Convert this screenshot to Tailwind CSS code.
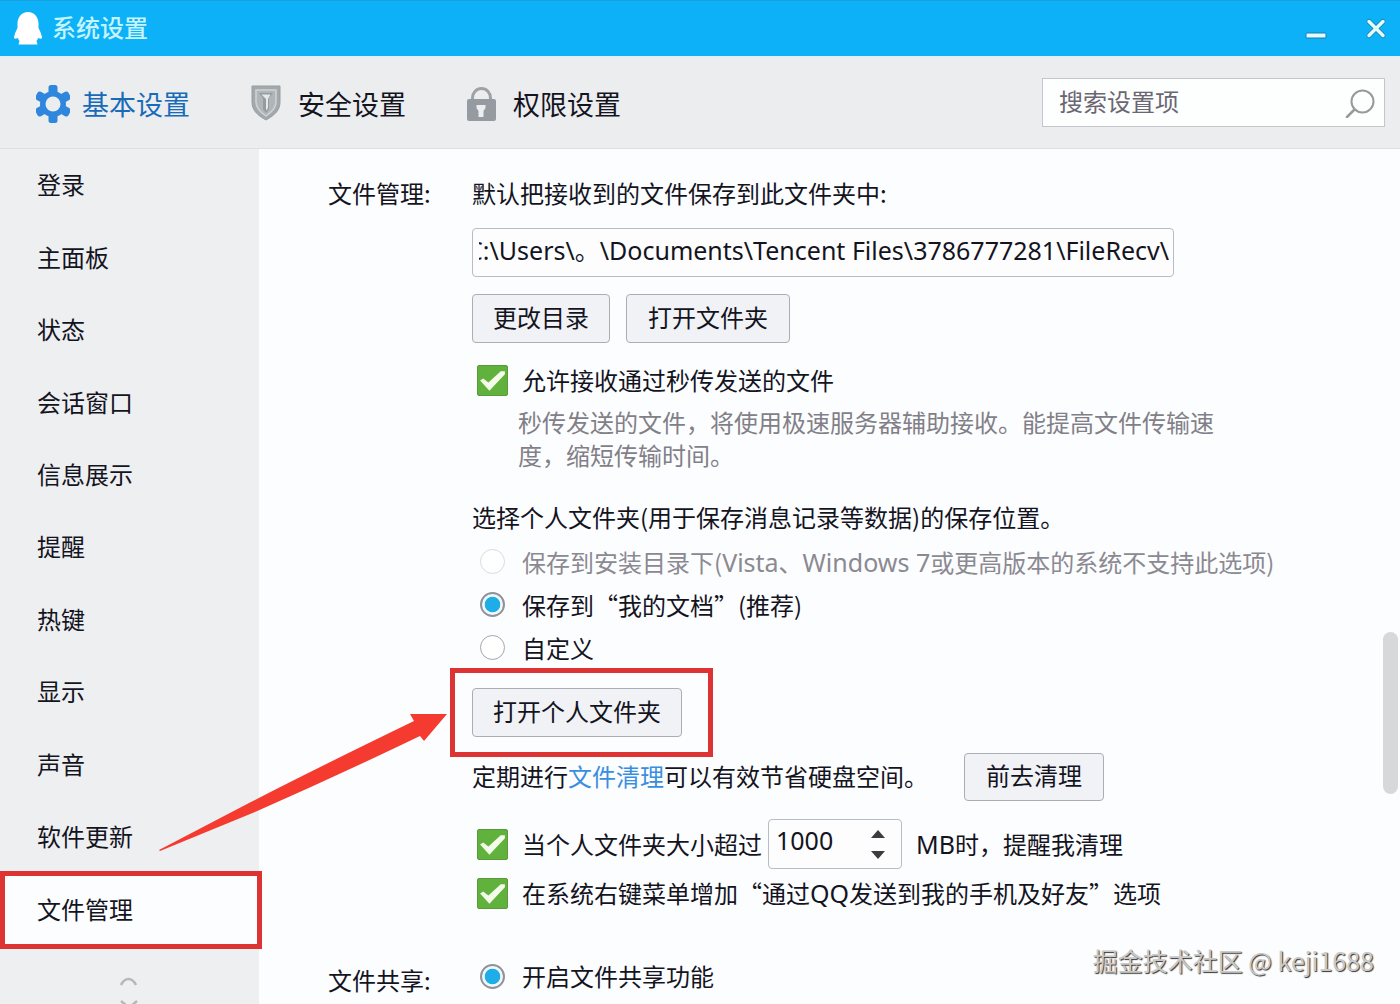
<!DOCTYPE html>
<html lang="zh-CN">
<head>
    <meta charset="UTF-8">
    <meta name="viewport" content="width=device-width, initial-scale=1.0">
    <title>系统设置</title>
    <script src="https://cdn.jsdelivr.net/npm/@tailwindcss/browser@4"></script>
</head>
<body class="relative flex h-screen flex-col overflow-hidden bg-[#fcfdfe] font-['Noto_Sans_CJK_SC',sans-serif] text-2xl leading-8 text-[#14141f]">

    <!-- Title bar -->
    <header class="flex h-14 shrink-0 items-center justify-between border-t border-[#1a9fd8] bg-[#0cb1f7] pl-3 pr-3">
        <div class="flex items-center gap-2">
            <svg class="h-9 w-8" viewBox="0 0 32 36" fill="#fff"><path d="M16 1C9.500 1 5.500 6.500 5.500 12.500V17C4 20 2.500 23 2 26.500c0 1.500 1.500 1.500 4 .5.3 1.500.8 2 1.500 3L6.500 33.500h19l-1-3.500c.7-1 1.200-1.500 1.500-3 2.500 1 4 1 4-.5-.5-3.500-2-6.500-3.500-9.500v-4.500C26.500 6.500 22.500 1 16 1z"/></svg>
            <h1 class="pb-1 text-2xl font-medium text-[#c5f4ff]">系统设置</h1>
        </div>
        <div class="flex items-center gap-9">
            <button aria-label="最小化" class="h-8 w-6"><svg class="h-8 w-6" viewBox="0 0 24 32"><rect x="2" y="20" width="20" height="5" rx="1" fill="#e4fbff" stroke="#1580b4"/></svg></button>
            <button aria-label="关闭" class="h-8 w-6"><svg class="h-8 w-6" viewBox="0 0 24 32" fill="none" stroke-linecap="round"><path d="M5 8.500l14 14M19 8.500l-14 14" stroke="#1580b4" stroke-width="5"/><path d="M5 8.500l14 14M19 8.500l-14 14" stroke="#e4fbff" stroke-width="3.500"/></svg></button>
        </div>
    </header>

    <!-- Tabs -->
    <div class="flex h-[93px] shrink-0 items-center justify-between border-b border-t border-b-[#dcdfe3] border-t-[#d5f3f8] bg-[#ecedef] pl-9 pr-[15px]">
        <nav class="flex gap-[61px] pt-[2px] text-[27px]">
            <a href="#" class="flex items-center gap-3 text-[#176bb8]">
                <svg class="h-[38px] w-[34px]" viewBox="0 0 34 38">
                    <g fill="#2f86dd">
                        <circle cx="17" cy="19" r="13"/>
                        <rect x="12.500" y="0" width="9" height="38" rx="2.500"/>
                        <rect x="12.500" y="0" width="9" height="38" rx="2.500" transform="rotate(60 17 19)"/>
                        <rect x="12.500" y="0" width="9" height="38" rx="2.500" transform="rotate(120 17 19)"/>
                    </g>
                    <circle cx="17" cy="19" r="7.500" fill="#ecedef"/>
                </svg>
                基本设置
            </a>
            <a href="#" class="flex items-center gap-[17px]">
                <svg class="h-[38px] w-[30px]" viewBox="0 0 30 38">
                    <path d="M1 1h28v16c0 8-5 13-14 18C6 30 1 25 1 17z" fill="#a3a8ac" stroke="#989da1"/>
                    <path d="M5 5h20v12c0 6-4 10-10 14C9 27 5 23 5 17z" fill="#b0b5b8" stroke="#cfd3d5" stroke-width="1.500"/>
                    <path d="M8 8h14l-4 5v11l-3 4-3-4V13z" fill="#959b9f"/>
                    <path d="M10.500 9.500h9L17 14v9l-2 2.500V14z" fill="#e6e9ea"/>
                </svg>
                安全设置
            </a>
            <a href="#" class="flex items-center gap-[17px]">
                <svg class="h-[38px] w-[29px]" viewBox="0 0 29 38">
                    <path d="M5.500 15v-2a9 9.500 0 0 1 18 0v2" fill="none" stroke="#9ca2a6" stroke-width="3"/>
                    <rect x="0" y="14" width="29" height="22" rx="2" fill="#959ba0"/>
                    <path d="M9.500 20h9v3l-2 3v6h-5v-6l-2-3z" fill="#eceef0"/>
                </svg>
                权限设置
            </a>
        </nav>
        <div class="relative">
            <input type="search" aria-label="搜索设置项" placeholder="搜索设置项" class="block h-[49px] w-[343px] border border-[#c3c6ca] bg-[#fdfefe] pb-1 pl-4 pr-12 placeholder:text-[#6b6672]">
            <button aria-label="搜索" class="absolute right-2 top-2 h-8 w-8"><svg class="h-8 w-8" viewBox="0 0 32 32" fill="none" stroke="#999" stroke-linecap="round"><circle cx="17.500" cy="15.500" r="11" stroke-width="2"/><path d="M9.500 23.500L2 31" stroke-width="2.500"/></svg></button>
        </div>
    </div>

    <div class="flex min-h-0 flex-1">
        <!-- Sidebar -->
        <aside class="w-[259px] shrink-0 bg-[#eeeff1]">
            <ul class="grid h-[797px] auto-rows-fr">
                <li><a href="#" class="flex h-full items-center pb-[2px] pl-[37px]">登录</a></li>
                <li><a href="#" class="flex h-full items-center pb-[2px] pl-[37px]">主面板</a></li>
                <li><a href="#" class="flex h-full items-center pb-[2px] pl-[37px]">状态</a></li>
                <li><a href="#" class="flex h-full items-center pb-[2px] pl-[37px]">会话窗口</a></li>
                <li><a href="#" class="flex h-full items-center pb-[2px] pl-[37px]">信息展示</a></li>
                <li><a href="#" class="flex h-full items-center pb-[2px] pl-[37px]">提醒</a></li>
                <li><a href="#" class="flex h-full items-center pb-[2px] pl-[37px]">热键</a></li>
                <li><a href="#" class="flex h-full items-center pb-[2px] pl-[37px]">显示</a></li>
                <li><a href="#" class="flex h-full items-center pb-[2px] pl-[37px]">声音</a></li>
                <li><a href="#" class="flex h-full items-center pb-[2px] pl-[37px]">软件更新</a></li>
                <li class="relative">
                    <a href="#" class="flex h-full items-center bg-[#fcfdfe] pb-[2px] pl-[37px]">文件管理</a>
                    <div class="pointer-events-none absolute -inset-y-[3px] left-0 -right-[3px] border-[5px] border-[#dd3333]"></div>
                </li>
            </ul>
            <svg class="mx-auto mt-7 h-[30px] w-6" viewBox="0 0 24 30" fill="none" stroke="#b5b8bc" stroke-width="2.500"><path d="M3 11c4-8 11-8 15 0M3 27l6 5M19 27l-6 5" /></svg>
        </aside>

        <!-- Settings -->
        <main class="relative min-w-0 flex-1 overflow-hidden pl-[69px] pt-6">
            <section class="flex">
                <h2 class="flex h-10 w-[144px] shrink-0 items-center">文件管理:</h2>
                <div class="min-w-0 flex-1">
                    <label for="savePath" class="flex h-10 items-center">默认把接收到的文件保存到此文件夹中:</label>
                    <input id="savePath" type="text" value="C:\Users\。\Documents\Tencent Files\3786777281\FileRecv\" class="mt-[15px] block h-[49px] w-[702px] max-w-full rounded-sm border border-[#b9bcc4] bg-[#fdfdfe] pb-2 pl-[6px] pr-1 font-['Noto_Sans','Noto_Sans_CJK_SC',sans-serif] text-[25px]">

                    <div class="mt-[17px] flex gap-4">
                        <button class="h-[49px] rounded-sm border border-[#a9adb5] bg-[#f0f2f6] px-5 pb-1">更改目录</button>
                        <button class="h-[49px] rounded-sm border border-[#a9adb5] bg-[#f0f2f6] px-[21px] pb-1">打开文件夹</button>
                    </div>

                    <label class="mt-[17px] flex h-10 items-center gap-[14px] pl-[5px]">
                        <span class="grid h-[31px] w-[31px]">
                            <input type="checkbox" checked class="col-start-1 row-start-1 appearance-none rounded-xs border border-[#5a9a3c] bg-[#61b13d]">
                            <svg class="pointer-events-none col-start-1 row-start-1" viewBox="0 0 30 30" fill="#f3fbe9"><path d="M3 15l3-2 5 4L23 6l4 0v3L12 25z"/></svg>
                        </span>
                        允许接收通过秒传发送的文件
                    </label>
                    <p class="ml-[46px] mt-[5px] w-[700px] max-w-full leading-[33px] text-[#827f88]">秒传发送的文件，将使用极速服务器辅助接收。能提高文件传输速度，缩短传输时间。</p>

                    <p class="mt-[26px] flex h-10 items-center">选择个人文件夹(用于保存消息记录等数据)的保存位置。</p>
                    <div class="mt-[3px]">
                        <label class="flex h-[43px] items-center gap-[17px] pl-2 text-[#8b8991]">
                            <input type="radio" name="folder" disabled class="h-[25px] w-[25px] appearance-none rounded-full border border-[#d9dbdf] bg-white">
                            <span>保存到安装目录下(<span class="font-['Noto_Sans',sans-serif] text-[25px]">Vista</span>、<span class="font-['Noto_Sans',sans-serif] text-[25px]">Windows 7</span>或更高版本的系统不支持此选项)</span>
                        </label>
                        <label class="flex h-[43px] items-center gap-[17px] pl-2">
                            <input type="radio" name="folder" checked class="h-[25px] w-[25px] appearance-none rounded-full border-2 border-[#8f9399] bg-radial from-[#1fade8] from-50% to-[#eefaff] to-55%">
                            保存到“我的文档”(推荐)
                        </label>
                        <label class="flex h-[43px] items-center gap-[17px] pl-2">
                            <input type="radio" name="folder" class="h-[25px] w-[25px] appearance-none rounded-full border border-[#a3a6ac] bg-white">
                            自定义
                        </label>
                    </div>

                    <div class="relative mt-[19px] w-fit">
                        <button class="block h-[49px] rounded-sm border border-[#a9adb5] bg-[#f0f2f6] px-5 pb-1">打开个人文件夹</button>
                        <div class="pointer-events-none absolute -bottom-5 -left-[22px] -right-[31px] -top-5 border-[5px] border-[#dd3333]"></div>
                    </div>

                    <div class="mt-4 flex h-12 items-center gap-8">
                        <p class="w-[460px] pb-[2px]">定期进行<a href="#" class="text-[#3a8ee0]">文件清理</a>可以有效节省硬盘空间。</p>
                        <button class="h-12 rounded-sm border border-[#a9adb5] bg-[#f0f2f6] px-[21px] pb-1">前去清理</button>
                    </div>

                    <div class="mt-[18px] flex h-[50px] items-center">
                        <label class="flex items-center gap-[14px] pl-[5px]">
                            <span class="grid h-[31px] w-[31px]">
                                <input type="checkbox" checked class="col-start-1 row-start-1 appearance-none rounded-xs border border-[#5a9a3c] bg-[#61b13d]">
                                <svg class="pointer-events-none col-start-1 row-start-1" viewBox="0 0 30 30" fill="#f3fbe9"><path d="M3 15l3-2 5 4L23 6l4 0v3L12 25z"/></svg>
                            </span>
                            当个人文件夹大小超过
                        </label>
                        <div class="relative ml-[6px] mr-[14px]">
                            <input id="limit" type="text" value="1000" aria-label="文件夹大小上限" class="block h-[50px] w-[134px] rounded-sm border border-[#b9bcc4] bg-[#fdfdfe] pb-2 pl-[7px] pr-10 font-['Noto_Sans',sans-serif] text-[25px]">
                            <div class="absolute right-4 top-2 flex flex-col">
                                <button aria-label="增加" onclick="step(100)"><svg class="h-4 w-4" viewBox="0 0 16 16" fill="#3c3c40"><path d="M1 11L8 3l7 8z"/></svg></button>
                                <button aria-label="减少" onclick="step(-100)"><svg class="mt-1 h-4 w-4" viewBox="0 0 16 16" fill="#3c3c40"><path d="M1 4l7 8 7-8z"/></svg></button>
                            </div>
                        </div>
                        <span><span class="font-['Noto_Sans',sans-serif] text-[25px]">MB</span>时，提醒我清理</span>
                    </div>

                    <label class="flex h-12 items-center gap-[14px] pl-[5px]">
                        <span class="grid h-[31px] w-[31px]">
                            <input type="checkbox" checked class="col-start-1 row-start-1 appearance-none rounded-xs border border-[#5a9a3c] bg-[#61b13d]">
                            <svg class="pointer-events-none col-start-1 row-start-1" viewBox="0 0 30 30" fill="#f3fbe9"><path d="M3 15l3-2 5 4L23 6l4 0v3L12 25z"/></svg>
                        </span>
                        <span>在系统右键菜单增加“通过<span class="font-['Noto_Sans',sans-serif] text-[25px]">QQ</span>发送到我的手机及好友”选项</span>
                    </label>
                </div>
            </section>

            <section class="mt-[39px] flex">
                <h2 class="flex h-12 w-[144px] shrink-0 items-center">文件共享:</h2>
                <label class="flex h-10 items-center gap-[17px] pl-2">
                    <input type="radio" name="share" checked class="h-[25px] w-[25px] appearance-none rounded-full border-2 border-[#8f9399] bg-radial from-[#1fade8] from-50% to-[#eefaff] to-55%">
                    开启文件共享功能
                </label>
            </section>

            <!-- Scrollbar thumb -->
            <div class="absolute right-[2px] top-[483px] h-[162px] w-[15px] rounded-full bg-[#d6d8da]"></div>
        </main>
    </div>

    <!-- Arrow from the menu entry to the button -->
    <svg class="pointer-events-none absolute left-[159px] top-[713px] h-[140px] w-[290px]" viewBox="0 0 290 140" fill="#f53a30"><path d="M0 137L90 90Q160 54 255 8L251 1h37L265 28l-4-5Q180 62 96 99L1 138z"/></svg>

    <p class="pointer-events-none absolute bottom-7 right-[26px] text-[25px] text-[#c9c9c9] text-shadow-[1px_1px_1px_#333]">掘金技术社区 @ keji1688</p>

    <script>
        // Keep the end of a long path in view
        let path = document.getElementById("savePath");
        path.scrollLeft = path.scrollWidth;

        function step(n) {
            let limit = document.getElementById("limit");
            limit.value = Math.max(0, Number(limit.value) + n);
        }
    </script>

</body>
</html>
